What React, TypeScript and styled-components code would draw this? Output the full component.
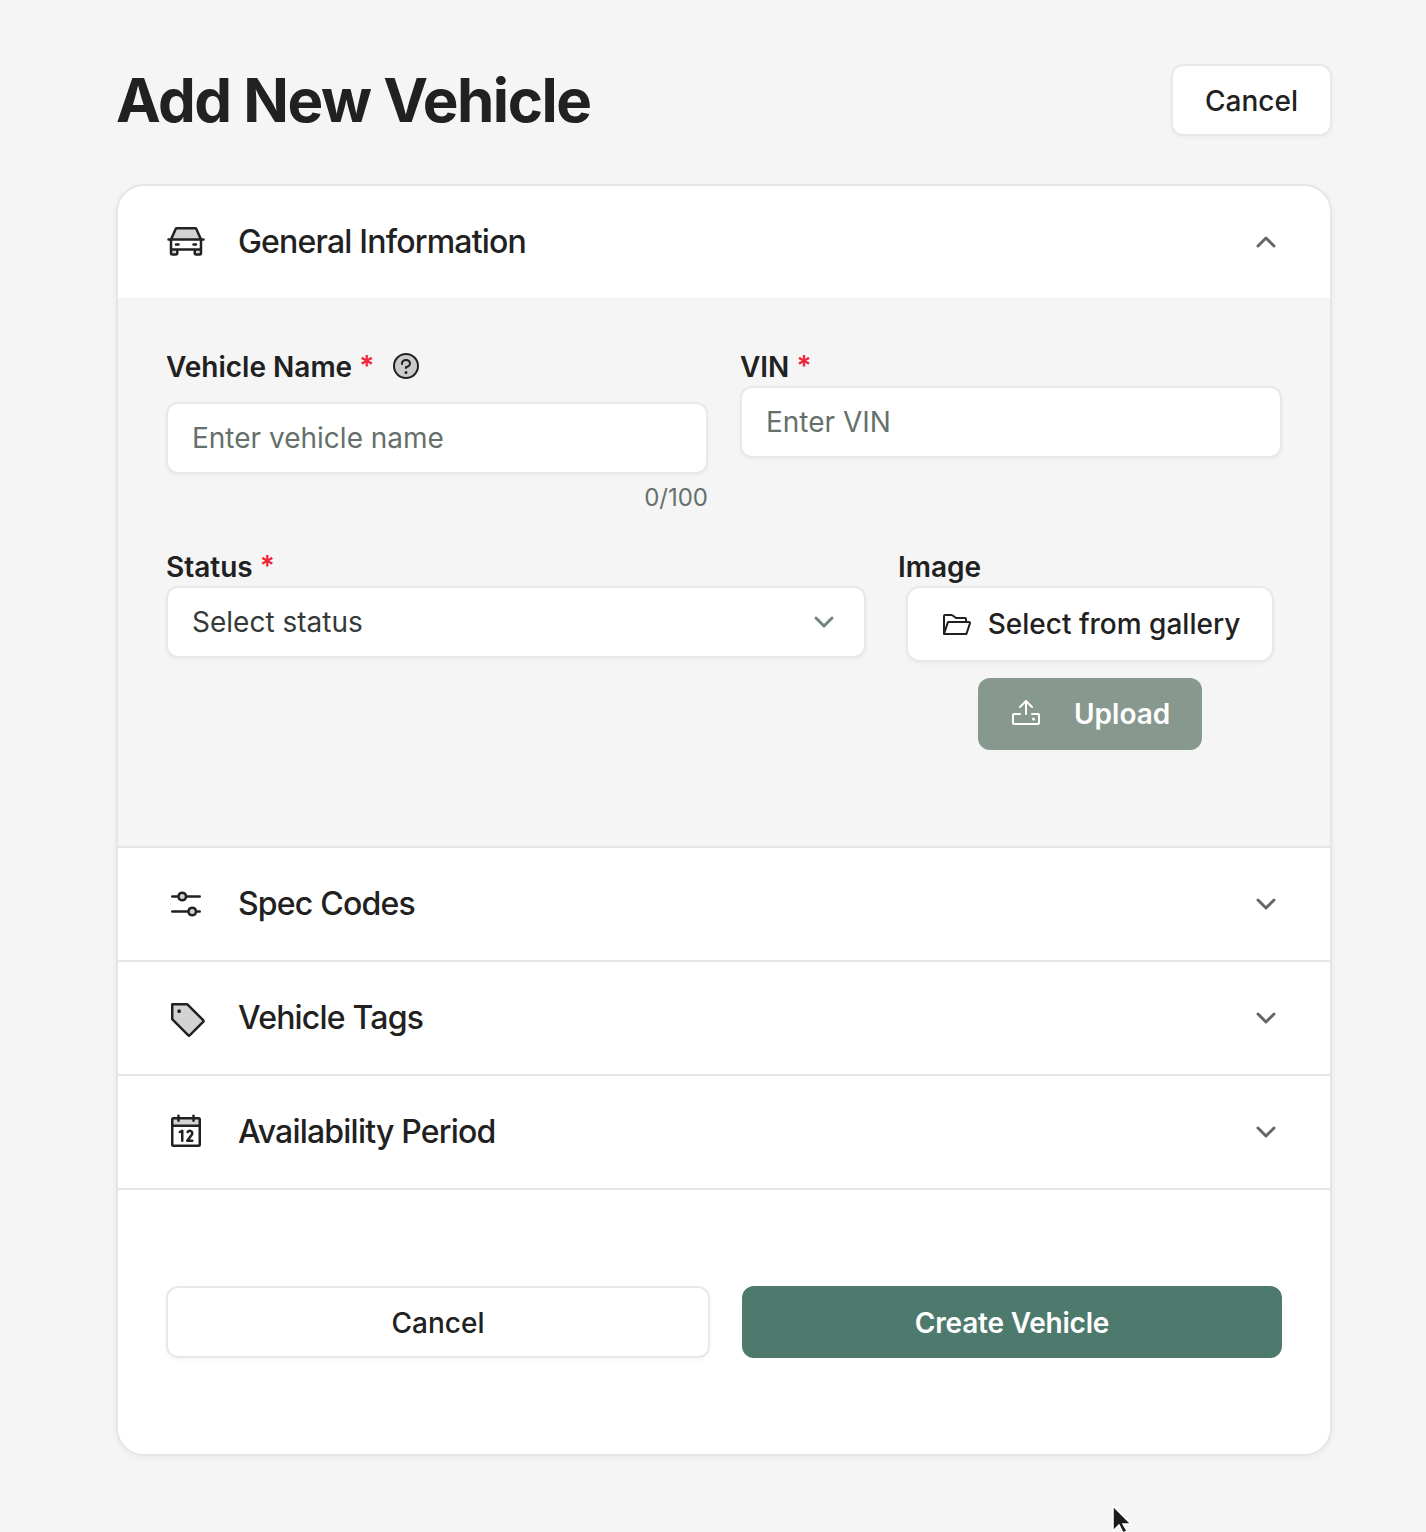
import React from 'react';
import styled, { createGlobalStyle } from 'styled-components';
import { ChevronDown, ChevronUp } from 'lucide-react';
import {
    PiCarDuotone,
    PiCalendarDuotone,
    PiFolderOpen,
    PiQuestionDuotone,
    PiSlidersHorizontalDuotone,
    PiTagDuotone,
    PiUpload,
} from 'react-icons/pi';

const GlobalStyle = createGlobalStyle`
  html, body {
    margin: 0;
    padding: 0;
    background: #f5f5f5;
  }
  * {
    box-sizing: border-box;
  }
`;

const Page = styled.div`
  position: relative;
  height: 1532px;
  overflow: hidden;
  padding: 64px 94px 0 116px;
  font-family: Inter, "Liberation Sans", sans-serif;
  color: #212121;
`;

const TopBar = styled.header`
  display: flex;
  align-items: center;
  justify-content: space-between;
  height: 72px;
  margin-bottom: 48px;
`;

const Title = styled.h1`
  margin: 0;
  font-size: 60px;
  line-height: 72px;
  font-weight: 700;
  letter-spacing: -1.5px;
`;

const Button = styled.button<{ $wide?: boolean }>`
  display: flex;
  align-items: center;
  justify-content: center;
  height: 72px;
  padding: 2px 0 0;
  width: ${(p) => (p.$wide ? '100%' : '161px')};
  background: #fff;
  border: 2px solid #e8e8e8;
  border-radius: 12px;
  box-shadow: 0 2px 4px rgba(0, 0, 0, 0.04);
  font: 500 28px Inter, sans-serif;
  color: #212121;
`;

const Card = styled.main`
  background: #fff;
  border: 2px solid #e6e6e6;
  border-radius: 28px;
  box-shadow: 0 2px 6px rgba(0, 0, 0, 0.05);
  height: 1272px;
  overflow: hidden;
`;

const SectionHeader = styled.div<{ $open?: boolean }>`
  display: flex;
  align-items: center;
  height: ${(p) => (p.$open ? '112px' : '114px')};
  padding: 0 48px;
  border-bottom: ${(p) => (p.$open ? 'none' : '2px solid #e6e6e6')};
  font-size: 32px;
  font-weight: 500;
  letter-spacing: -0.8px;
  color: #212121;
`;

const SectionIcon = styled.span`
  display: flex;
  width: 40px;
  margin-right: 32px;
  font-size: 40px;
`;

const SectionTitle = styled.span`
  flex: 1;
  margin-top: -2px;
`;

const Chevron = styled.span`
  display: flex;
  color: #666;
`;

const SectionBody = styled.section`
  background: #f5f5f5;
  padding: 48px 48px 96px;
  border-bottom: 2px solid #e6e6e6;
`;

const NameRow = styled.div`
  display: grid;
  grid-template-columns: 542px 542px;
  column-gap: 32px;
  margin-bottom: 32px;
`;

const MediaRow = styled.div`
  display: grid;
  grid-template-columns: 700px 384px;
  column-gap: 32px;
`;

const Label = styled.label<{ $gap?: boolean }>`
  display: flex;
  align-items: center;
  height: 40px;
  padding-top: 2px;
  margin-bottom: ${(p) => (p.$gap ? '16px' : '0')};
  font-size: 28px;
  font-weight: 600;
  color: #212121;
`;

const Required = styled.span`
  margin-left: 7px;
  margin-top: -2px;
  color: #f0263c;
`;

const HelpIcon = styled.span`
  display: flex;
  margin-left: 16px;
  margin-top: -2px;
  font-size: 32px;
`;

const TextInput = styled.input`
  display: block;
  width: 100%;
  height: 72px;
  padding: 0 24px;
  background: #fff;
  border: 2px solid #e8e8e8;
  border-radius: 12px;
  box-shadow: 0 2px 4px rgba(0, 0, 0, 0.04);
  font: 400 28px Inter, sans-serif;
  outline: none;
  &::placeholder {
    color: #65706b;
    opacity: 1;
  }
`;

const Counter = styled.div`
  margin-top: 8px;
  height: 32px;
  font-size: 24px;
  line-height: 32px;
  text-align: right;
  color: #65706b;
`;

const SelectBox = styled.div`
  display: flex;
  align-items: center;
  justify-content: space-between;
  height: 72px;
  padding: 0 24px;
  background: #fff;
  border: 2px solid #e8e8e8;
  border-radius: 12px;
  box-shadow: 0 2px 4px rgba(0, 0, 0, 0.04);
  font-size: 28px;
  color: #353a38;
`;

const SelectChevron = styled.span`
  display: flex;
  color: #71857e;
`;

const ImageActions = styled.div`
  display: flex;
  flex-direction: column;
  align-items: center;
  gap: 16px;
`;

const GalleryButton = styled.button`
  display: flex;
  align-items: center;
  justify-content: center;
  gap: 16px;
  width: 368px;
  height: 76px;
  background: #fff;
  border: 2px solid #e8e8e8;
  border-radius: 14px;
  box-shadow: 0 2px 4px rgba(0, 0, 0, 0.04);
  font: 500 28px Inter, sans-serif;
  color: #212121;
`;

const UploadButton = styled.button`
  display: flex;
  align-items: center;
  gap: 32px;
  width: 224px;
  height: 72px;
  padding: 0 0 0 32px;
  background: #87998f;
  border: none;
  border-radius: 12px;
  font: 600 28px Inter, sans-serif;
  color: #fff;
`;

const ButtonIcon = styled.span`
  display: flex;
  font-size: 32px;
`;

const Footer = styled.footer`
  display: grid;
  grid-template-columns: 544px 540px;
  column-gap: 32px;
  padding: 96px 48px 0;
`;

const PrimaryButton = styled.button`
  height: 72px;
  padding: 2px 0 0;
  background: #4d7a6c;
  border: none;
  border-radius: 12px;
  font: 600 28px Inter, sans-serif;
  letter-spacing: -0.2px;
  color: #fff;
`;

const Cursor = styled.svg`
  position: absolute;
  left: 1110px;
  top: 1504px;
`;

export default function App() {
    return (
        <Page>
            <GlobalStyle />
            <TopBar>
                <Title>Add New Vehicle</Title>
                <Button>Cancel</Button>
            </TopBar>
            <Card>
                <SectionHeader $open>
                    <SectionIcon><PiCarDuotone /></SectionIcon>
                    <SectionTitle>General Information</SectionTitle>
                    <Chevron><ChevronUp size={32} strokeWidth={2.25} /></Chevron>
                </SectionHeader>
                <SectionBody>
                    <NameRow>
                        <div>
                            <Label $gap>
                                Vehicle Name<Required>*</Required>
                                <HelpIcon><PiQuestionDuotone /></HelpIcon>
                            </Label>
                            <TextInput placeholder="Enter vehicle name" />
                            <Counter>0/100</Counter>
                        </div>
                        <div>
                            <Label>VIN<Required>*</Required></Label>
                            <TextInput placeholder="Enter VIN" />
                        </div>
                    </NameRow>
                    <MediaRow>
                        <div>
                            <Label>Status<Required>*</Required></Label>
                            <SelectBox>
                                Select status
                                <SelectChevron><ChevronDown size={32} strokeWidth={2.25} /></SelectChevron>
                            </SelectBox>
                        </div>
                        <div>
                            <Label>Image</Label>
                            <ImageActions>
                                <GalleryButton>
                                    <ButtonIcon><PiFolderOpen /></ButtonIcon>
                                    Select from gallery
                                </GalleryButton>
                                <UploadButton>
                                    <ButtonIcon><PiUpload /></ButtonIcon>
                                    Upload
                                </UploadButton>
                            </ImageActions>
                        </div>
                    </MediaRow>
                </SectionBody>
                <SectionHeader>
                    <SectionIcon><PiSlidersHorizontalDuotone /></SectionIcon>
                    <SectionTitle>Spec Codes</SectionTitle>
                    <Chevron><ChevronDown size={32} strokeWidth={2.25} /></Chevron>
                </SectionHeader>
                <SectionHeader>
                    <SectionIcon><PiTagDuotone /></SectionIcon>
                    <SectionTitle>Vehicle Tags</SectionTitle>
                    <Chevron><ChevronDown size={32} strokeWidth={2.25} /></Chevron>
                </SectionHeader>
                <SectionHeader>
                    <SectionIcon><PiCalendarDuotone /></SectionIcon>
                    <SectionTitle>Availability Period</SectionTitle>
                    <Chevron><ChevronDown size={32} strokeWidth={2.25} /></Chevron>
                </SectionHeader>
                <Footer>
                    <Button $wide>Cancel</Button>
                    <PrimaryButton>Create Vehicle</PrimaryButton>
                </Footer>
            </Card>
            <Cursor width="26" height="30" viewBox="0 0 26 30">
                <path d="M3 2 L3 27 L9 21 L13 29 L17 27 L13 20 L21 20 Z" fill="#1c1c1c" stroke="#fff" strokeWidth="1.5" />
            </Cursor>
        </Page>
    );
}
